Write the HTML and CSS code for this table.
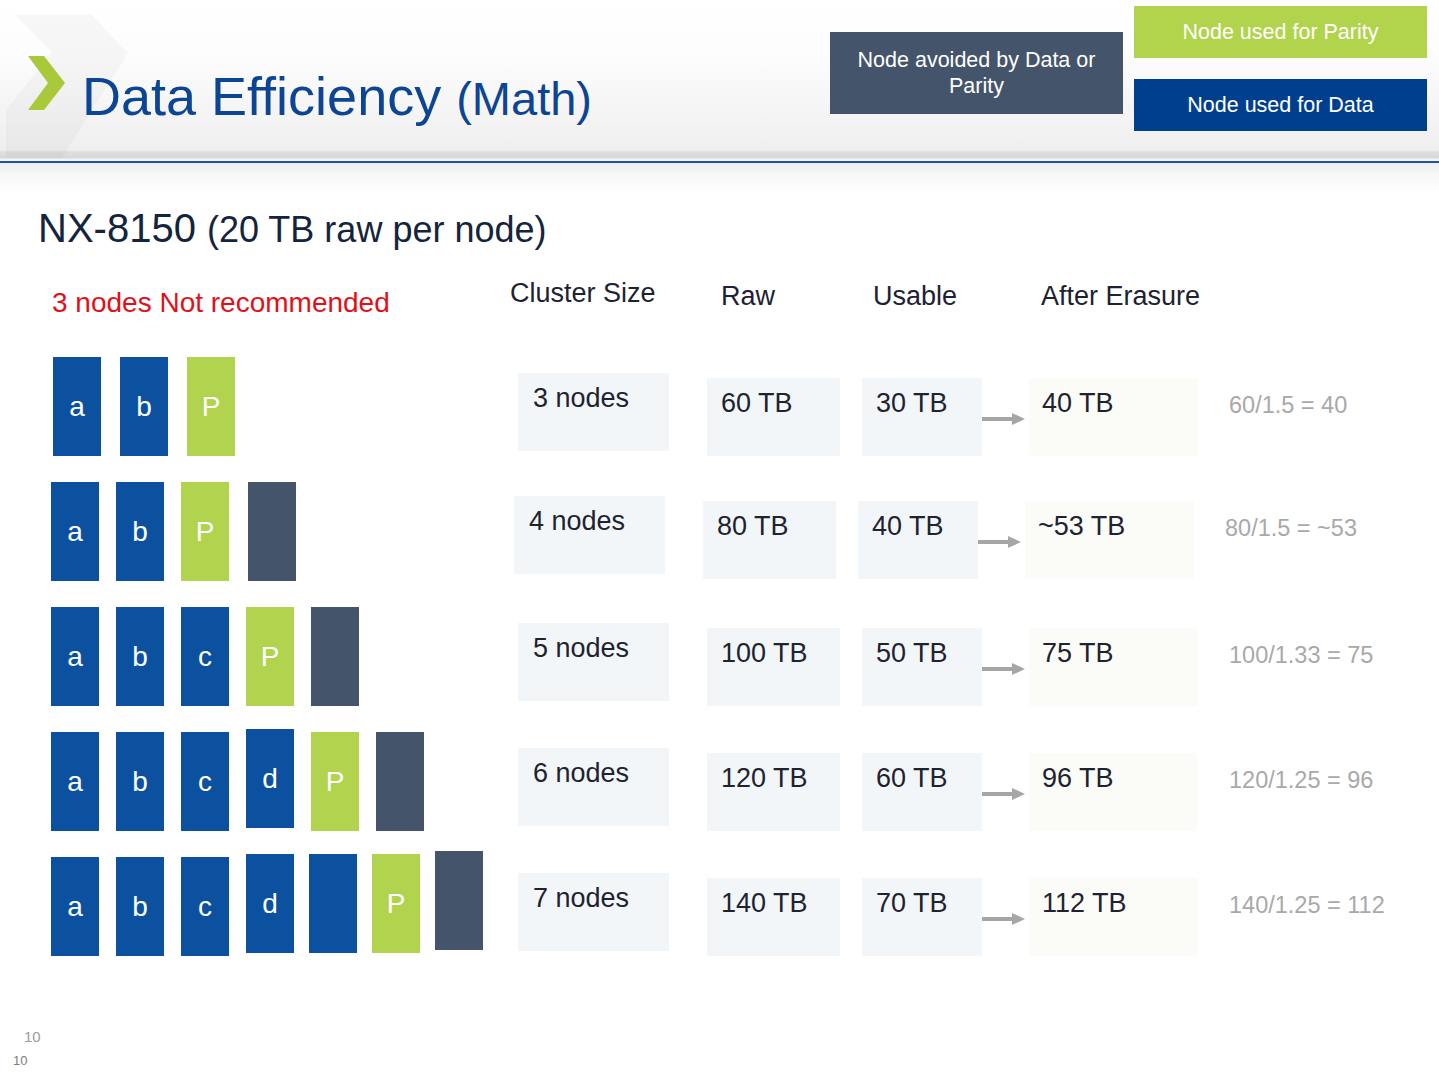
FILE: index.html
```html
<!DOCTYPE html>
<html lang="en">
<head>
<meta charset="utf-8">
<title>Data Efficiency (Math)</title>
<link rel="stylesheet" href="styles.css">
</head>
<body>
<div class="slide">
  <header class="header">
    <svg class="bg-chevron" width="140" height="161" viewBox="0 0 140 161" aria-hidden="true">
      <polygon points="15,15 92,15 128,53 62,158 6,158 6,110 52,52" fill="#000" fill-opacity="0.028"/>
    </svg>
    <svg class="chevron" width="38" height="56" viewBox="0 0 38 56" aria-hidden="true">
      <polygon points="0,0 16,0 37,27 16,54 0,54 20,27" fill="#a9c93b"/>
    </svg>
    <h1 class="title">Data Efficiency <span class="title-sub">(Math)</span></h1>
    <div class="legend">
      <div class="legend-box legend-avoid">Node avoided by Data or<br>Parity</div>
      <div class="legend-col">
        <div class="legend-box legend-parity">Node used for Parity</div>
        <div class="legend-box legend-data">Node used for Data</div>
      </div>
    </div>
  </header>
  <div class="rule"></div>

  <main class="main">
    <h2 class="model">NX-8150 <span class="model-sub">(20 TB raw per node)</span></h2>

    <div class="col-heads">
      <div class="warn">3 nodes Not recommended</div>
      <div class="head head-size">Cluster Size</div>
      <div class="head head-raw">Raw</div>
      <div class="head head-usable">Usable</div>
      <div class="head head-after">After Erasure</div>
    </div>

    <div class="table">
      <div class="row">
        <div class="blocks blocks-r1">
          <div class="node data">a</div><div class="node data">b</div><div class="node parity">P</div>
        </div>
        <div class="cells">
          <div class="cell label">3 nodes</div>
          <div class="cell raw">60 TB</div>
          <div class="cell usable">30 TB</div>
          <svg class="arrow" width="47" height="14" viewBox="0 0 47 14"><rect x="0" y="5" width="31" height="4" fill="#a6a6a6"/><polygon points="30,1 43,7 30,13" fill="#a6a6a6"/></svg>
          <div class="cell after">40 TB</div>
          <div class="formula">60/1.5 = 40</div>
        </div>
      </div>

      <div class="row row-shift">
        <div class="blocks">
          <div class="node data">a</div><div class="node data">b</div><div class="node parity">P</div><div class="node avoid gap-wide"></div>
        </div>
        <div class="cells">
          <div class="cell label">4 nodes</div>
          <div class="cell raw">80 TB</div>
          <div class="cell usable">40 TB</div>
          <svg class="arrow" width="47" height="14" viewBox="0 0 47 14"><rect x="0" y="5" width="31" height="4" fill="#a6a6a6"/><polygon points="30,1 43,7 30,13" fill="#a6a6a6"/></svg>
          <div class="cell after">~53 TB</div>
          <div class="formula">80/1.5 = ~53</div>
        </div>
      </div>

      <div class="row">
        <div class="blocks">
          <div class="node data">a</div><div class="node data">b</div><div class="node data">c</div><div class="node parity">P</div><div class="node avoid"></div>
        </div>
        <div class="cells">
          <div class="cell label">5 nodes</div>
          <div class="cell raw">100 TB</div>
          <div class="cell usable">50 TB</div>
          <svg class="arrow" width="47" height="14" viewBox="0 0 47 14"><rect x="0" y="5" width="31" height="4" fill="#a6a6a6"/><polygon points="30,1 43,7 30,13" fill="#a6a6a6"/></svg>
          <div class="cell after">75 TB</div>
          <div class="formula">100/1.33 = 75</div>
        </div>
      </div>

      <div class="row">
        <div class="blocks">
          <div class="node data">a</div><div class="node data">b</div><div class="node data">c</div><div class="node data raised">d</div><div class="node parity">P</div><div class="node avoid"></div>
        </div>
        <div class="cells">
          <div class="cell label">6 nodes</div>
          <div class="cell raw">120 TB</div>
          <div class="cell usable">60 TB</div>
          <svg class="arrow" width="47" height="14" viewBox="0 0 47 14"><rect x="0" y="5" width="31" height="4" fill="#a6a6a6"/><polygon points="30,1 43,7 30,13" fill="#a6a6a6"/></svg>
          <div class="cell after">96 TB</div>
          <div class="formula">120/1.25 = 96</div>
        </div>
      </div>

      <div class="row">
        <div class="blocks">
          <div class="node data">a</div><div class="node data">b</div><div class="node data">c</div><div class="node data raised">d</div><div class="node data raised tight"></div><div class="node parity raised tight">P</div><div class="node avoid raised2 tight"></div>
        </div>
        <div class="cells">
          <div class="cell label">7 nodes</div>
          <div class="cell raw">140 TB</div>
          <div class="cell usable">70 TB</div>
          <svg class="arrow" width="47" height="14" viewBox="0 0 47 14"><rect x="0" y="5" width="31" height="4" fill="#a6a6a6"/><polygon points="30,1 43,7 30,13" fill="#a6a6a6"/></svg>
          <div class="cell after">112 TB</div>
          <div class="formula">140/1.25 = 112</div>
        </div>
      </div>
    </div>
  </main>

  <footer class="footer">
    <div class="page-num">10</div>
    <div class="page-num-small">10</div>
  </footer>
</div>
</body>
</html>
```

FILE: styles.css
```css
html, body {
  margin: 0;
  padding: 0;
  background: #ffffff;
}

body {
  font-family: "Liberation Sans", Arial, Helvetica, sans-serif;
  width: 1439px;
  height: 1080px;
  overflow: hidden;
}

.slide {
  width: 1439px;
  height: 1080px;
  position: relative;
}

/* ---------- header ---------- */
.header {
  position: relative;
  height: 161px;
  display: flex;
  align-items: flex-start;
  background: linear-gradient(to bottom,
    #ffffff 0px,
    #fcfcfc 60px,
    #efefef 150px,
    #dedede 152px,
    #d9d9d9 158px,
    #f4f4f4 159px,
    #f4f4f4 161px);
}

.bg-chevron {
  position: absolute;
  left: 0;
  top: 0;
}

.chevron {
  position: relative;
  flex: none;
  margin-left: 28px;
  margin-top: 56px;
}

.title {
  position: relative;
  margin: 69px 0 0 16px;
  font-weight: normal;
  font-size: 54px;
  line-height: 54px;
  color: #0c4594;
  white-space: nowrap;
}

.title-sub {
  font-size: 47px;
}

.legend {
  margin-left: auto;
  margin-right: 12px;
  display: flex;
  align-items: flex-start;
  gap: 11px;
}

.legend-col {
  display: flex;
  flex-direction: column;
  gap: 21px;
  margin-top: 6px;
}

.legend-box {
  width: 293px;
  display: flex;
  align-items: center;
  justify-content: center;
  text-align: center;
  color: #ffffff;
  font-size: 21.5px;
  line-height: 26px;
}

.legend-avoid {
  margin-top: 32px;
  height: 82px;
  background: #44546a;
}

.legend-parity {
  height: 52px;
  background: #b2d34c;
}

.legend-data {
  height: 52px;
  background: #003f8e;
}

.rule {
  height: 2px;
  background: #1f5399;
}

/* ---------- main ---------- */
.main {
  padding-top: 45px;
  background: linear-gradient(to bottom, #ededed 0px, #f8f8f8 12px, #ffffff 30px) no-repeat;
  background-size: 100% 30px;
}

.model {
  margin: 0 0 0 38px;
  font-weight: normal;
  font-size: 40px;
  line-height: 40px;
  color: #15243d;
}

.model-sub {
  font-size: 36px;
}

.col-heads {
  margin-top: 30px;
  display: flex;
  align-items: flex-start;
  font-size: 27px;
  line-height: 27px;
  color: #1d2232;
}

.warn {
  margin-left: 52px;
  margin-top: 9px;
  width: 458px;
  font-size: 28px;
  line-height: 28px;
  color: #e3101a;
}

.head-size { width: 211px; }
.head-raw { width: 152px; margin-top: 3px; }
.head-usable { width: 168px; margin-top: 3px; }
.head-after { margin-top: 3px; }

/* ---------- table ---------- */
.table {
  margin-top: 40px;
  display: flex;
  flex-direction: column;
  gap: 26px;
}

.row {
  display: flex;
  align-items: flex-start;
  height: 99px;
}

.blocks {
  flex: none;
  width: 467px;
  margin-left: 51px;
  display: flex;
  align-items: flex-start;
  gap: 17px;
}

.blocks-r1 {
  width: 465px;
  margin-left: 53px;
  gap: 19px;
}

.node {
  width: 48px;
  height: 99px;
  flex: none;
  display: flex;
  align-items: center;
  justify-content: center;
  color: #ffffff;
  font-size: 28px;
  line-height: 28px;
}

.node.data { background: #0b519f; }
.node.parity { background: #b2d34d; }
.node.avoid { background: #44546a; }
.node.raised { margin-top: -3px; }
.node.raised2 { margin-top: -6px; }
.node.gap-wide { margin-left: 2px; }
.node.tight { margin-left: -2px; }

.cells {
  display: flex;
  align-items: flex-start;
}

.row-shift .cells {
  margin-left: -4px;
  margin-top: -2px;
}

.cell {
  flex: none;
  box-sizing: border-box;
  height: 78px;
  font-size: 27px;
  line-height: 27px;
  color: #1e2330;
  white-space: nowrap;
}

.label {
  width: 151px;
  margin-top: 16px;
  padding: 12px 0 0 15px;
  background: #f3f6f9;
}

.raw {
  width: 133px;
  margin-left: 38px;
  margin-top: 21px;
  padding: 12px 0 0 14px;
  background: #f3f6f9;
}

.usable {
  width: 120px;
  margin-left: 22px;
  margin-top: 21px;
  padding: 12px 0 0 14px;
  background: #f3f6f9;
}

.arrow {
  flex: none;
  margin-top: 55px;
}

.after {
  width: 169px;
  margin-top: 21px;
  padding: 12px 0 0 13px;
  background: #fbfbf8;
}

.formula {
  margin-left: 31px;
  margin-top: 37px;
  font-size: 23.5px;
  line-height: 23px;
  color: #a9a9a9;
  white-space: nowrap;
}

/* ---------- footer ---------- */
.footer {
  margin-top: 73px;
}

.page-num {
  padding-left: 24px;
  font-size: 15px;
  line-height: 15px;
  color: #9c9c9c;
}

.page-num-small {
  margin-top: 10px;
  padding-left: 13px;
  font-size: 13px;
  line-height: 13px;
  color: #7d7d7d;
}
```
